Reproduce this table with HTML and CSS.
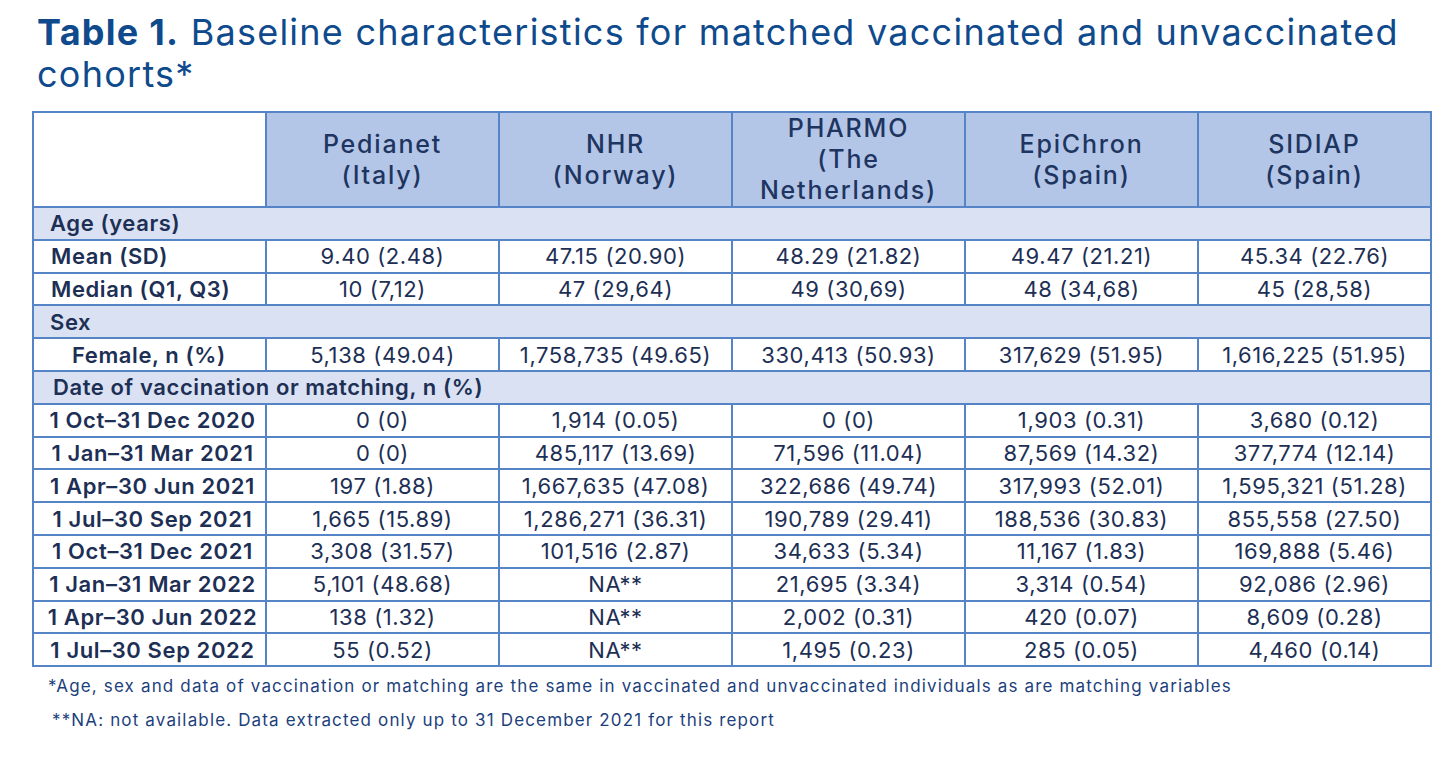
FILE: index.html
```html
<!DOCTYPE html>
<html lang="en">
<head>
<meta charset="utf-8">
<title>Table 1</title>
<link rel="stylesheet" href="styles.css">
</head>
<body>
<div class="page">
  <h1 class="title"><span class="title-bold">Table 1.</span> Baseline characteristics for matched vaccinated and unvaccinated cohorts*</h1>
  <table class="data">
    <colgroup>
      <col class="c"><col class="c"><col class="c"><col class="c"><col class="c"><col class="c">
    </colgroup>
    <thead>
      <tr class="head">
        <th class="blank"></th>
        <th>Pedianet<br>(Italy)</th>
        <th>NHR<br>(Norway)</th>
        <th>PHARMO<br>(The<br>Netherlands)</th>
        <th>EpiChron<br>(Spain)</th>
        <th>SIDIAP<br>(Spain)</th>
      </tr>
    </thead>
    <tbody>
      <tr class="section"><td colspan="6">Age (years)</td></tr>
      <tr><td class="label">Mean (SD)</td><td>9.40 (2.48)</td><td class="k">47.15 (20.90)</td><td class="k">48.29 (21.82)</td><td class="k">49.47 (21.21)</td><td class="k">45.34 (22.76)</td></tr>
      <tr><td class="label">Median (Q1, Q3)</td><td>10 (7,12)</td><td>47 (29,64)</td><td>49 (30,69)</td><td>48 (34,68)</td><td>45 (28,58)</td></tr>
      <tr class="section"><td colspan="6">Sex</td></tr>
      <tr><td class="label indent">Female, n (%)</td><td>5,138 (49.04)</td><td class="k">1,758,735 (49.65)</td><td class="k">330,413 (50.93)</td><td class="k">317,629 (51.95)</td><td class="k">1,616,225 (51.95)</td></tr>
      <tr class="section"><td colspan="6" class="sec2">Date of vaccination or matching, n (%)</td></tr>
      <tr><td class="label center">1 Oct–31 Dec 2020</td><td>0 (0)</td><td>1,914 (0.05)</td><td>0 (0)</td><td>1,903 (0.31)</td><td>3,680 (0.12)</td></tr>
      <tr><td class="label center">1 Jan–31 Mar 2021</td><td>0 (0)</td><td>485,117 (13.69)</td><td>71,596 (11.04)</td><td>87,569 (14.32)</td><td>377,774 (12.14)</td></tr>
      <tr><td class="label center">1 Apr–30 Jun 2021</td><td>197 (1.88)</td><td>1,667,635 (47.08)</td><td>322,686 (49.74)</td><td>317,993 (52.01)</td><td>1,595,321 (51.28)</td></tr>
      <tr><td class="label center">1 Jul–30 Sep 2021</td><td>1,665 (15.89)</td><td>1,286,271 (36.31)</td><td>190,789 (29.41)</td><td>188,536 (30.83)</td><td>855,558 (27.50)</td></tr>
      <tr><td class="label center">1 Oct–31 Dec 2021</td><td>3,308 (31.57)</td><td>101,516 (2.87)</td><td>34,633 (5.34)</td><td>11,167 (1.83)</td><td>169,888 (5.46)</td></tr>
      <tr><td class="label center">1 Jan–31 Mar 2022</td><td>5,101 (48.68)</td><td>NA**</td><td>21,695 (3.34)</td><td>3,314 (0.54)</td><td>92,086 (2.96)</td></tr>
      <tr><td class="label center">1 Apr–30 Jun 2022</td><td>138 (1.32)</td><td>NA**</td><td>2,002 (0.31)</td><td>420 (0.07)</td><td>8,609 (0.28)</td></tr>
      <tr><td class="label center">1 Jul–30 Sep 2022</td><td>55 (0.52)</td><td>NA**</td><td>1,495 (0.23)</td><td>285 (0.05)</td><td>4,460 (0.14)</td></tr>
    </tbody>
  </table>
  <p class="note note1">*Age, sex and data of vaccination or matching are the same in vaccinated and unvaccinated individuals as are matching variables</p>
  <p class="note note2">**NA: not available. Data extracted only up to 31 December 2021 for this report</p>
</div>
</body>
</html>
```

FILE: styles.css
```css
html, body {
  margin: 0;
  padding: 0;
  background: #ffffff;
}

.page {
  font-family: Inter, "Open Sans", "Liberation Sans", sans-serif;
  color: #1d2f55;
  padding: 11px 0 0 32px;
}

.title {
  margin: 0 0 16px 5px;
  font-size: 36px;
  line-height: 42px;
  font-weight: 400;
  color: #0f4a8c;
  width: 1400px;
  letter-spacing: 1.25px;
}

.title-bold {
  font-weight: 700;
}

.data {
  border-collapse: collapse;
  table-layout: fixed;
  width: 1398px;
  font-size: 22px;
  letter-spacing: 0.6px;
}

.data col.c {
  width: 233px;
}

.data th,
.data td {
  border: 2px solid #5585c6;
  padding: 0 4px;
  text-align: center;
  vertical-align: middle;
  white-space: nowrap;
}

.head th {
  height: 91px;
  background: #b4c6e7;
  font-size: 25px;
  font-weight: 500;
  line-height: 31px;
  letter-spacing: 1.8px;
  color: #1d3560;
}

.head th.blank {
  background: #ffffff;
}

.data tbody tr {
  height: 32.8px;
}

.data tbody td {
  line-height: 28px;
}

.section td {
  background: #d9e1f2;
  text-align: left;
  font-weight: 600;
  padding-left: 16px;
}

.section td.sec2 {
  padding-left: 19px;
}

.label {
  font-weight: 600;
}

.data td.label {
  text-align: left;
  padding-left: 17px;
}

.data td.label.indent {
  padding-left: 38px;
}

.data td.label.center {
  text-align: center;
  padding-left: 10px;
}

.data td.k {
  border-top-color: #1a1a1a;
}

.note {
  margin: 0;
  font-size: 17px;
  line-height: 20px;
  letter-spacing: 1.15px;
  color: #1d3f7c;
}

.note1 {
  margin-top: 9px;
  padding-left: 16px;
}

.note2 {
  margin-top: 14px;
  padding-left: 20px;
}
```
